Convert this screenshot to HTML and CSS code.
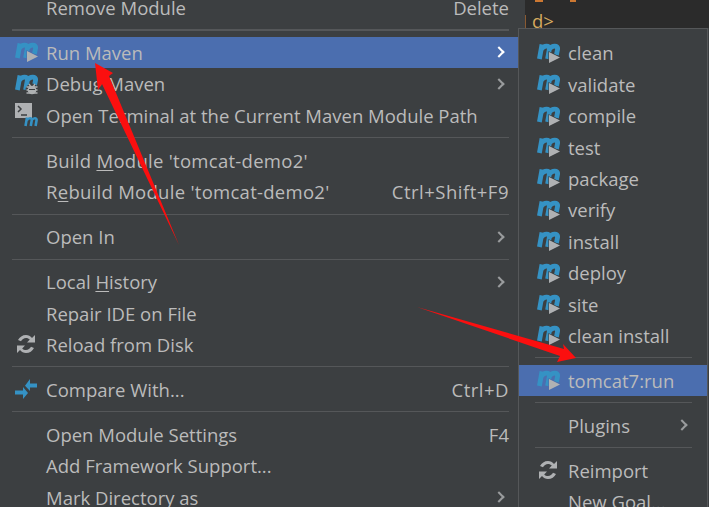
FILE: index.html
```html
<!DOCTYPE html>
<html lang="en">
<head>
<meta charset="utf-8">
<title>Run Maven menu</title>
<link rel="stylesheet" href="styles.css">
</head>
<body>
<svg class="defs" width="0" height="0" aria-hidden="true">
  <defs>
    <symbol id="m" viewBox="0 0 24 24">
      <path class="m-stroke" d="M3.400 18 6 3.500M5.500 8C8 4.500 13.800 3.800 13.400 8L11.600 18M13.500 8C16 4.500 22.200 3.800 21.600 8L20.400 14"/>
    </symbol>
    <symbol id="mrun" viewBox="0 0 24 24">
      <use href="#m" width="24" height="24"/>
      <path class="tri" d="M13 11 24 16.500 13 22Z"/>
    </symbol>
    <symbol id="reload" viewBox="0 0 18 18">
      <path class="grey" d="M9 0C5.500 0 2.500 2 1 5l3 1.200C5 4.300 6.900 3 9 3c1.500 0 2.800.6 3.800 1.600L10 7.500h8V0l-3 3C13.500 1.200 11.400 0 9 0ZM0 10.500V18l3-3c1.500 1.800 3.600 3 6 3 3.500 0 6.500-2 8-5l-3-1.200C13 13.700 11.100 15 9 15c-1.500 0-2.800-.6-3.800-1.600L8 10.500Z"/>
    </symbol>
  </defs>
</svg>

<div class="editor">
  <div class="tick tick-a"></div>
  <div class="tick tick-b"></div>
  <div class="gutter"></div>
  <div class="code">d&gt;</div>
</div>

<nav class="menu main">
  <div class="row"><span class="ic"></span><span class="label">Remove Module</span><span class="key">Delete</span></div>
  <div class="sep sep-thick"></div>
  <div class="row on"><span class="ic"><svg class="icon"><use href="#mrun"/></svg></span><span class="label">Run Maven</span><span class="chev bright"></span></div>
  <div class="row"><span class="ic"><svg class="icon" viewBox="0 0 24 24"><use href="#m" width="24" height="24"/><circle class="bug-gap" cx="18" cy="18" r="6.500"/><circle class="grey" cx="18" cy="18" r="4.300"/><path class="bug-legs" d="M12.500 15h11M12.500 18h11M12.500 21h11M15 12l2 3M21 12l-2 3"/><path class="bug-mid" d="M15 17.500h6"/></svg></span><span class="label">Debug Maven</span><span class="chev"></span></div>
  <div class="row"><span class="ic"><svg class="icon" viewBox="0 0 24 24"><path class="grey" d="M1 0h17v15H1z"/><path class="term" d="M4 3l3 3-3 3M7 12h6"/><path class="m-small" d="M11.500 23 13 14.500M13 17c1.500-2 5-2.500 4.800 0L16.800 23M17.800 17c1.500-2 5-2.500 4.800 0L21.600 23"/></svg></span><span class="label">Open Terminal at the Current Maven Module Path</span></div>
  <div class="sep"></div>
  <div class="row"><span class="ic"></span><span class="label loose">Build <u>M</u>odule 'tomcat-demo2'</span></div>
  <div class="row"><span class="ic"></span><span class="label loose">R<u>e</u>build Module 'tomcat-demo2'</span><span class="key wide">Ctrl+Shift+F9</span></div>
  <div class="sep"></div>
  <div class="row"><span class="ic"></span><span class="label">Open In</span><span class="chev"></span></div>
  <div class="sep"></div>
  <div class="row"><span class="ic"></span><span class="label">Local <u>H</u>istory</span><span class="chev"></span></div>
  <div class="row"><span class="ic"></span><span class="label">Repair IDE on File</span></div>
  <div class="row"><span class="ic"><svg class="icon-s"><use href="#reload"/></svg></span><span class="label">Reload from Disk</span></div>
  <div class="sep"></div>
  <div class="row"><span class="ic"><svg class="icon-c" viewBox="0 0 22 20"><path class="blue" d="M10 6.700 15 0v4.500h7v4h-7V12ZM13 14 8 20v-4.500H0v-4h8V8Z"/></svg></span><span class="label">Compare With...</span><span class="key wide">Ctrl+D</span></div>
  <div class="sep"></div>
  <div class="row"><span class="ic"></span><span class="label">Open Module Settings</span><span class="key">F4</span></div>
  <div class="row"><span class="ic"></span><span class="label">Add Framework Support...</span></div>
  <div class="row"><span class="ic"></span><span class="label">Mark Directory as</span><span class="chev"></span></div>
</nav>

<nav class="menu sub">
  <div class="row"><span class="ic"><svg class="icon"><use href="#mrun"/></svg></span><span class="label">clean</span></div>
  <div class="row"><span class="ic"><svg class="icon"><use href="#mrun"/></svg></span><span class="label">validate</span></div>
  <div class="row"><span class="ic"><svg class="icon"><use href="#mrun"/></svg></span><span class="label">compile</span></div>
  <div class="row"><span class="ic"><svg class="icon"><use href="#mrun"/></svg></span><span class="label">test</span></div>
  <div class="row"><span class="ic"><svg class="icon"><use href="#mrun"/></svg></span><span class="label">package</span></div>
  <div class="row"><span class="ic"><svg class="icon"><use href="#mrun"/></svg></span><span class="label">verify</span></div>
  <div class="row"><span class="ic"><svg class="icon"><use href="#mrun"/></svg></span><span class="label">install</span></div>
  <div class="row"><span class="ic"><svg class="icon"><use href="#mrun"/></svg></span><span class="label">deploy</span></div>
  <div class="row"><span class="ic"><svg class="icon"><use href="#mrun"/></svg></span><span class="label">site</span></div>
  <div class="row"><span class="ic"><svg class="icon"><use href="#mrun"/></svg></span><span class="label">clean install</span></div>
  <div class="sep"></div>
  <div class="row on"><span class="ic"><svg class="icon"><use href="#mrun"/></svg></span><span class="label">tomcat7:run</span></div>
  <div class="sep"></div>
  <div class="row"><span class="ic"></span><span class="label">Plugins</span><span class="chev"></span></div>
  <div class="sep"></div>
  <div class="row"><span class="ic"><svg class="icon-s"><use href="#reload"/></svg></span><span class="label">Reimport</span></div>
  <div class="row"><span class="ic"></span><span class="label">New Goal...</span></div>
</nav>

<svg class="arrows" width="709" height="507" viewBox="0 0 709 507" aria-hidden="true">
  <path class="arrow" d="M179 245 109 76 113 73 95 63 98 90 102 84Z"/>
  <path class="arrow" d="M417 307 564 349 563 344 576 358 557 362 560 356Z"/>
</svg>
</body>
</html>
```
FILE: styles.css
```css
html, body { margin: 0; padding: 0; }
body {
  position: relative;
  width: 709px;
  height: 507px;
  overflow: hidden;
  background: #3c3f41;
  font-family: "Open Sans", "Noto Sans", sans-serif;
  font-size: 18.500px;
  color: #bbbbbb;
}
.defs { position: absolute; }
.editor {
  position: absolute;
  left: 525px;
  top: 0;
  width: 184px;
  height: 28px;
  background: #2b2b2b;
}
.code {
  position: absolute;
  left: 7px;
  top: 9px;
  color: #d5a95f;
  line-height: 24px;
}
.tick { position: absolute; top: 0; height: 2px; background: #cc7832; }
.tick-a { left: 10px; width: 8px; }
.tick-b { left: 45px; width: 6px; }
.gutter {
  position: absolute;
  left: 0;
  top: 15px;
  width: 1px;
  height: 13px;
  background: #8a5a32;
}
.menu { position: absolute; background: #3c3f41; }
.main { left: 0; top: -8.200px; width: 518px; }
.sub {
  left: 518px;
  top: 28px;
  width: 190px;
  height: 490px;
  padding-top: 8.200px;
  border: 1px solid #555759;
  border-bottom: 0;
  box-sizing: border-box;
}
.row {
  --row-bg: #3c3f41;
  display: flex;
  align-items: center;
  height: 31.400px;
  white-space: nowrap;
}
.main .row { padding: 0 9px 0 14px; }
.sub .row { padding: 0 15px 0 17px; }
.row.on { --row-bg: #4b6eaf; background: #4b6eaf; }
.ic { flex: 0 0 32px; display: flex; align-items: center; }
.icon { width: 24px; height: 24px; display: block; }
.icon-s { width: 18px; height: 18px; display: block; margin-left: 3px; }
.icon-c { width: 22px; height: 20px; display: block; margin-left: 1px; }
.label { flex: 1; }
.loose { letter-spacing: 0.280px; }
.wide { letter-spacing: 0.500px; }
u { text-decoration-thickness: 1px; text-underline-offset: 2px; }
.chev {
  width: 8px;
  height: 8px;
  margin-right: 6px;
  border-top: 2px solid #9a9c9e;
  border-right: 2px solid #9a9c9e;
  box-sizing: border-box;
  transform: rotate(45deg);
}
.chev.bright { border-color: #ffffff; }
.sep { height: 1px; margin: 6.300px 9px 6.300px 12px; background: #555759; }
.sep-thick { height: 2px; margin-top: 5.800px; margin-bottom: 5.800px; }
.sub .sep { margin: 6.300px 15px 6.300px 16px; }

.m-stroke { fill: none; stroke: #3592c4; stroke-width: 4.800; }
.m-small { fill: none; stroke: #3592c4; stroke-width: 2.600; }
.tri { fill: #afb1b3; stroke: var(--row-bg); stroke-width: 1.200; paint-order: stroke; }
.grey { fill: #afb1b3; }
.blue { fill: #3592c4; }
.term { fill: none; stroke: #3c3f41; stroke-width: 1.500; }
.bug-gap { fill: var(--row-bg); }
.bug-legs { fill: none; stroke: #afb1b3; stroke-width: 1.400; }
.bug-mid { fill: none; stroke: #3c3f41; stroke-width: 1; }
.arrow { fill: #fb0f0f; }

.arrows { position: absolute; left: 0; top: 0; pointer-events: none; }
```
